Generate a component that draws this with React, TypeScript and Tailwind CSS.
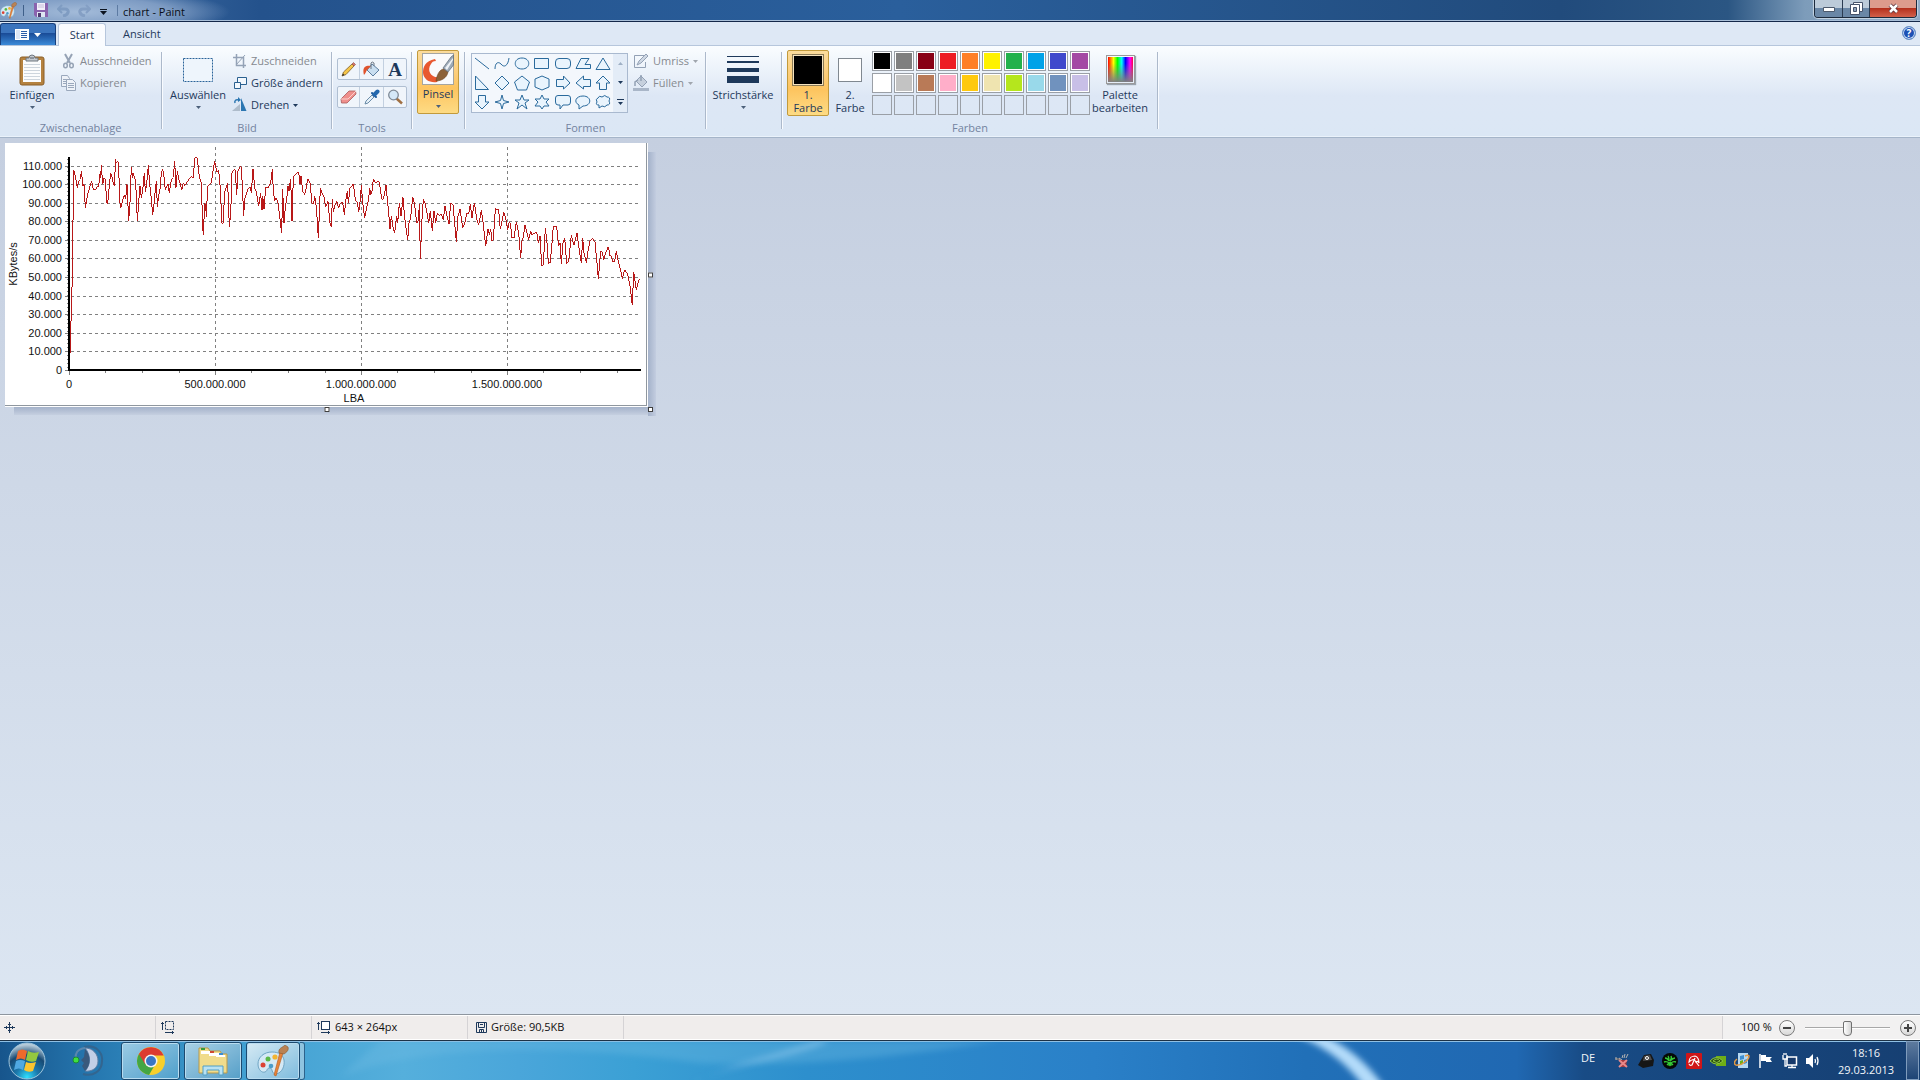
import { useState } from 'react';
import type { ReactNode } from 'react';

const TRACE_LEFT =
    '212,652 212,555 214,555 214,457 217,450 219,255 221,102 226,122 232,156 236,135 241,130 244,104 249,150 252,145 256,216 260,190 264,172 270,150 275,134 280,162 286,162 291,152 296,152 300,115 302,125 304,86 308,145 312,127 316,130 320,200 323,202 328,150 332,110 336,122 341,148 344,148 346,70 349,82 352,78 355,78 360,200 362,216 368,192 373,178 377,190 381,145 386,254 390,200 394,92 397,125 399,110 404,125 407,140 412,254 416,200 420,150 424,186 428,165 433,110 436,168 440,145 445,86 449,145 453,180 458,236 462,205 466,160 469,136 472,212 476,180 480,160 484,110 488,100 492,122 496,162 500,150 504,145 508,170 512,140 516,128 520,124 524,76 528,155 532,104 536,128 541,145 545,163 550,140 554,150 560,140 566,132 572,122 580,125 584,66 592,66 598,125 604,140 608,270 610,298 614,200 617,210 619,242 623,150 628,146 634,142 638,110 644,75 650,108 656,104 660,145 666,262 669,262 674,170 680,148 683,142 688,272 692,235 696,110 702,102 706,102 710,178 714,104 720,92 724,92 727,150 731,240 734,190 740,170 745,158 750,154 754,170 759,98 764,155 770,172 776,210 782,172 786,223 788,180 792,220 797,152 804,155 808,148 812,142 817,98 820,165 824,195 829,185 834,200 840,250 845,292 848,160 852,262 856,215 860,190 864,150 867,165 872,128 876,256 880,122 886,115 896,108 900,145 903,120 908,165 914,176 920,150 923,128 930,140 936,200 941,205 944,180 949,212 955,307 961,155 966,172 972,182 977,212 984,196 990,262';

const TRACE_RIGHT =
    '0,262 4,274 7,188 10,228 14,210 20,196 26,216 32,200 38,200 43,236 48,190 52,165 55,200 60,155 66,150 70,143 76,192 82,200 86,228 90,200 94,148 98,200 104,246 110,215 116,190 119,155 122,178 126,165 130,128 137,142 142,136 148,138 155,190 160,190 168,148 174,210 180,278 184,240 190,280 194,290 200,240 203,260 208,200 213,240 219,184 223,235 228,275 233,313 237,260 242,245 248,182 254,205 260,262 265,255 268,204 271,370 275,265 280,188 286,205 291,232 296,262 301,224 307,286 312,225 317,260 322,232 328,238 334,235 340,252 345,210 351,240 357,265 362,200 369,208 374,260 379,317 384,240 390,220 394,245 398,276 404,262 410,232 416,234 421,205 426,245 433,200 440,248 446,268 454,222 460,265 467,330 474,280 478,296 482,280 486,316 490,310 496,218 506,222 511,280 516,255 521,228 527,245 533,283 537,260 541,260 546,305 552,305 559,258 566,290 572,367 575,318 580,305 585,266 590,285 596,312 602,285 606,298 612,292 620,288 625,320 630,300 635,390 640,388 646,275 651,320 655,382 660,380 664,345 670,272 680,272 686,330 690,320 694,384 699,320 704,305 710,383 716,375 724,298 732,328 741,290 746,330 754,382 758,306 762,350 769,380 775,340 780,315 788,308 795,318 800,370 805,428 812,345 817,350 821,372 827,350 835,332 840,360 844,360 848,378 854,375 859,345 865,378 872,402 877,428 884,402 893,415 900,450 907,508 911,408 919,462 924,440 929,428';

const yLabels = [
    { y: 23, text: '110.000' },
    { y: 41, text: '100.000' },
    { y: 60, text: '90.000' },
    { y: 78, text: '80.000' },
    { y: 97, text: '70.000' },
    { y: 115, text: '60.000' },
    { y: 134, text: '50.000' },
    { y: 153, text: '40.000' },
    { y: 171, text: '30.000' },
    { y: 190, text: '20.000' },
    { y: 208, text: '10.000' },
    { y: 227, text: '0' },
];

const xLabels = [
    { x: 64, text: '0' },
    { x: 210, text: '500.000.000' },
    { x: 356, text: '1.000.000.000' },
    { x: 502, text: '1.500.000.000' },
];

const minorTicks = [100, 137, 174, 246, 283, 320, 392, 429, 466, 538, 575, 612];

const palette = [
    ['#000000', '#7f7f7f', '#880015', '#ed1c24', '#ff7f27', '#fff200', '#22b14c', '#00a2e8', '#3f48cc', '#a349a4'],
    ['#ffffff', '#c3c3c3', '#b97a57', '#ffaec9', '#ffc90e', '#efe4b0', '#b5e61d', '#99d9ea', '#7092be', '#c8bfe7'],
    ['', '', '', '', '', '', '', '', '', ''],
];

// 16x16 outlines for the shape gallery, row by row
const shapes = [
    { name: 'Linie', d: 'M1 2L15 13' },
    { name: 'Kurve', d: 'M1 13C1 7 4 5 7 8C10 12 14 10 15 2' },
    { name: 'Ellipse', d: 'M8 2C17 2 17 13 8 13C-1 13 -1 2 8 2Z' },
    { name: 'Rechteck', d: 'M.5 2.500H14.500V12.500H.5Z' },
    { name: 'Abgerundetes Rechteck', d: 'M4 2.500H12Q15.500 2.500 15.500 6V9Q15.500 12.500 12 12.500H4Q.5 12.500 .5 9V6Q.5 2.500 4 2.500Z' },
    { name: 'Polygon', d: 'M6 2.500H14L10 8.500H15.500V12.500H1Z' },
    { name: 'Dreieck', d: 'M8 2L15 13.500H1Z' },
    { name: 'Rechtwinkliges Dreieck', d: 'M1.500 1V14.500H14.500Z' },
    { name: 'Raute', d: 'M8 1L15 8L8 15L1 8Z' },
    { name: 'Fünfeck', d: 'M8 1L15.500 7L12.500 15H3.500L.5 7Z' },
    { name: 'Sechseck', d: 'M8 1L15 4V12L8 15L1 12V4Z' },
    { name: 'Pfeil nach rechts', d: 'M1.500 4.500H8.500V1L15 8L8.500 14V11.500H1.500Z' },
    { name: 'Pfeil nach links', d: 'M15.500 4.500H8.500V1L1 8L8.500 14V11.500H15.500Z' },
    { name: 'Pfeil nach oben', d: 'M8 1L15 8H11.500V14.500H4.500V8H1Z' },
    { name: 'Pfeil nach unten', d: 'M8 15L1 8H4.500V1.500H11.500V8H15Z' },
    { name: 'Vierzackiger Stern', d: 'M8 1L9.500 6.500L15 8L9.500 9.500L8 15L6.500 9.500L1 8L6.500 6.500Z' },
    { name: 'Fünfzackiger Stern', d: 'M8 1L10 6H15L11 9L13 15L8 11L3 15L5 9L1 6H6Z' },
    { name: 'Sechszackiger Stern', d: 'M8 1L10 5H15L12 8L15 12H10L8 15L6 12H1L4 8L1 5H6Z' },
    { name: 'Rechteckige Legende', d: 'M3 1.500H13Q15.500 1.500 15.500 4V8Q15.500 11 13 11H8L5 15V11H3Q.5 11 .5 8V4Q.5 1.500 3 1.500Z' },
    { name: 'Ovale Legende', d: 'M4 11C-2 8 1 2 8 2C17 2 17 12 8 12L4 15Z' },
    { name: 'Wolkenlegende', d: 'M3 4Q4 1 7 3Q10 0 12 3Q16 3 14 7Q16 11 12 11Q10 14 7 12L4 14L4 11Q0 11 2 8Q0 5 3 4Z' },
];

function Arrow({ className = 'text-[#1e395b]' }: { className?: string }) {
    return (
        <svg width="5" height="3" viewBox="0 0 5 3" className={className}>
            <path d="M0 0H5L2.500 3Z" fill="currentColor" />
        </svg>
    );
}

function Group({ label, className, children }: { label: string; className: string; children: ReactNode }) {
    return (
        <div className="flex shrink-0">
            <section className={`flex flex-col ${className}`}>
                <div className="flex h-[70px] items-start">{children}</div>
                <div className="text-center leading-4 text-[#7383a0]">{label}</div>
            </section>
            <div className="mt-[2px] h-[77px] w-[2px] border-r border-l border-r-[#f8fbff] border-l-[#acb9cb]"></div>
        </div>
    );
}

interface BigButtonProps {
    label: string;
    second?: string;
    icon: ReactNode;
    className: string;
}

function BigButton({ label, second, icon, className }: BigButtonProps) {
    return (
        <button className={`flex shrink-0 flex-col items-center border leading-[13px] ${className}`}>
            <span className="flex h-[37px] items-center">{icon}</span>
            <span>{label}</span>
            <span className="flex h-[13px] items-center">{second ?? <Arrow className="text-[#4c607a]" />}</span>
        </button>
    );
}

function SmallButton({ label, icon, arrow, disabled }: { label: string; icon: ReactNode; arrow?: boolean; disabled?: boolean }) {
    return (
        <button disabled={disabled} className="flex h-[22px] items-center gap-1 whitespace-nowrap disabled:text-[#868a90]">
            {icon}
            <span>{label}</span>
            {arrow && <Arrow className={disabled ? 'text-[#a0a6ae]' : 'text-[#1e395b]'} />}
        </button>
    );
}

function PaintIcon({ size }: { size: number }) {
    return (
        <svg width={size} height={size} viewBox="0 0 32 32">
            <path d="M15 7C7 7 1 12 1 19C1 25 5 28 8 27C11 26 9 23 13 23C16 23 14 29 19 29C25 28 28 21 27 15C26 10 22 7 15 7Z" fill="#d5e9f5" stroke="#6fa5c4" />
            <circle cx="6" cy="20" r="2.500" fill="#dc4234" />
            <circle cx="11" cy="14" r="2.500" fill="#5cb947" />
            <circle cx="18" cy="12" r="2.600" fill="#f2b431" />
            <circle cx="14" cy="21" r="2.300" fill="#4b9cc9" />
            <path d="M26 8L19 31L17 30L23 7Z" fill="#e7833a" stroke="#b45a1d" strokeWidth=".6" />
            <path d="M22 8C21 3 25 3 28 0L31 2C32 5 30 7 27 9Z" fill="#b98254" stroke="#8a5a33" strokeWidth=".6" />
        </svg>
    );
}

function TitleBar() {
    return (
        <header className="flex h-[22px] items-start border-b border-[#14284a] shadow-[inset_0_-1px_0_#a9bfd8] [background:radial-gradient(ellipse_150px_24px_at_80px_12px,#a3bbd9_0%,#7d9bc3_60%,transparent_100%),linear-gradient(90deg,#4c78ad_0,#24528c_260px,#2a5f9c_900px,#214b7c_1560px,#2b5683_90%,#7d9cba_94%,#8fabc6_100%)]">
            <div className="flex h-[20px] items-center text-[#1c1f26]">
                <PaintIcon size={17} />
                <div className="ml-[6px] h-[11px] w-px bg-[#3f5f89]"></div>
                <button aria-label="Speichern" className="ml-[10px]">
                    <svg width="14" height="14" viewBox="0 0 14 14">
                        <path d="M0 0H14V14H2L0 12Z" fill="#8a63ae" />
                        <path d="M3 0H11V7H3Z" fill="#f3effa" />
                        <path d="M4 2H10M4 4H10" stroke="#c9bfda" />
                        <path d="M3 9H11V14H3Z" fill="#dfe6f2" />
                        <path d="M4 10H7V14H4Z" fill="#4f3a72" />
                    </svg>
                </button>
                <button aria-label="Rückgängig" className="ml-[9px]" disabled>
                    <svg width="13" height="13" viewBox="0 0 13 13" fill="none" stroke="#7f9cc2" strokeWidth="3">
                        <path d="M2 5H8C13 5 12 11 6 12" />
                        <path d="M5 1L1 5L5 9" strokeWidth="2" />
                    </svg>
                </button>
                <button aria-label="Wiederholen" className="ml-2" disabled>
                    <svg width="13" height="13" viewBox="0 0 13 13" fill="none" stroke="#849fc4" strokeWidth="3">
                        <path d="M11 5H5C0 5 1 11 7 12" />
                        <path d="M8 1L12 5L8 9" strokeWidth="2" />
                    </svg>
                </button>
                <button aria-label="Schnellzugriff anpassen" className="ml-[9px] pt-1">
                    <svg width="7" height="6" viewBox="0 0 7 6">
                        <path d="M0 0H7V1H0ZM0 2H7L3.500 6Z" fill="#0c1420" />
                    </svg>
                </button>
                <div className="ml-[10px] h-[11px] w-px bg-[#5d7ba3]"></div>
                <h1 className="ml-[5px] pt-1 text-[11px] text-[#0a0f18]">chart - Paint</h1>
            </div>
            <div className="mr-[3px] ml-auto flex h-[18px] overflow-hidden rounded-b-[4px] border border-t-0 border-[#1c2a3c] shadow-[0_0_1px_1px_#c8d6e4]">
                <button aria-label="Minimieren" className="flex w-[28px] items-center justify-center border-r border-[#2b3c52] bg-linear-to-b from-[#bccbd9] from-50% to-[#6a87a6] to-50% pt-[2px]">
                    <svg width="12" height="5" viewBox="0 0 12 5">
                        <path d="M.5.5H11.500V4.500H.5Z" fill="#fff" stroke="#4d5a6c" />
                    </svg>
                </button>
                <button aria-label="Verkleinern" className="flex w-[27px] items-center justify-center border-r border-[#2b3c52] bg-linear-to-b from-[#bccbd9] from-50% to-[#6a87a6] to-50%">
                    <svg width="13" height="13" viewBox="0 0 13 13">
                        <path d="M3.500.5H12.500V9.500H3.500Z" fill="#fff" stroke="#46536a" />
                        <path d="M.5 2.500H9.500V12.500H.5Z" fill="#fff" stroke="#46536a" />
                        <path d="M3.500 5.500H6.500V9.500H3.500Z" fill="#8fa3ba" stroke="#46536a" />
                    </svg>
                </button>
                <button aria-label="Schließen" className="flex w-[46px] items-center justify-center bg-linear-to-b from-[#dd9b8c] from-50% via-[#b5301c] via-50% to-[#d2604a]">
                    <svg width="13" height="11" viewBox="0 0 13 11" fill="none">
                        <path d="M3 2L10 9M10 2L3 9" stroke="#5a3038" strokeWidth="4" />
                        <path d="M3 2L10 9M10 2L3 9" stroke="#fff" strokeWidth="2.500" />
                    </svg>
                </button>
            </div>
        </header>
    );
}

function Tabs() {
    return (
        <nav className="flex h-[24px] items-end border-b border-[#b6c6dc] bg-[#dee8f5] pr-1 text-[#1e395b]">
            <button aria-label="Datei" className="flex h-[22px] w-[56px] items-center justify-center gap-[5px] rounded-t-[3px] border border-b-0 border-[#173f7c] bg-linear-to-b from-[#3b74bd] from-45% via-[#1a4c98] via-45% to-[#3b8ad8]">
                <svg width="14" height="11" viewBox="0 0 14 11">
                    <path d="M0 0H14V11H0Z" fill="#fff" />
                    <path d="M6 2.500H12M6 4.500H12M6 6.500H12M6 8.500H12" stroke="#2c5ea8" />
                    <path d="M1 1H5V10H1Z" fill="#dce7f5" />
                </svg>
                <svg width="7" height="4" viewBox="0 0 7 4">
                    <path d="M0 0H7L3.500 4Z" fill="#fff" />
                </svg>
            </button>
            <button className="-mb-px ml-[2px] h-[23px] w-[48px] rounded-t-[3px] border border-b-0 border-[#b6c6dc] bg-[#fafcff]">Start</button>
            <button className="ml-2 h-[22px] px-[9px]">Ansicht</button>
            <button aria-label="Hilfe" className="mb-[5px] ml-auto flex size-[14px] items-center justify-center rounded-full border border-[#6d93c8] bg-[#1d51b5] text-[10px] leading-none font-bold text-white shadow-[inset_0_0_0_1px_#cfe0f5]">
                ?
            </button>
        </nav>
    );
}

function Ribbon() {
    const selected = 'rounded-[2px] border-[#c29a3c] bg-linear-to-b from-[#fbdc9d] from-0% via-[#fdc45f] via-60% to-[#fddb84]';

    return (
        <div className="flex h-[92px] overflow-hidden border-b border-[#a5b5c9] bg-linear-to-b from-[#fafdff] via-[#dde7f5] via-55% to-[#dbe7f5] pt-1 text-[#1e395b] shadow-[inset_0_-1px_0_#eaf2fb]">
            <Group label="Zwischenablage" className="w-[161px]">
                <BigButton
                    label="Einfügen"
                    className="ml-1 w-[56px] border-transparent"
                    icon={
                        <svg width="26" height="32" viewBox="0 0 26 32">
                            <rect x="1" y="3" width="24" height="28" rx="2" fill="#b5823f" stroke="#8b5f28" />
                            <path d="M4 6H22V28H4Z" fill="#fbfcfd" />
                            <path d="M5 10.500H21M5 13.500H21M5 16.500H21M5 19.500H21M5 22.500H21M5 25.500H21" stroke="#cdd5dd" />
                            <path d="M7 7V4H10Q10 1 13 1Q16 1 16 4H19V7Z" fill="#c3c9d0" stroke="#6f767e" />
                            <path d="M11 4H15" stroke="#555c66" />
                        </svg>
                    }
                />
                <div className="flex flex-col">
                    <SmallButton
                        disabled
                        label="Ausschneiden"
                        icon={
                            <svg width="16" height="16" viewBox="0 0 16 16" fill="none" stroke="#96a3b5" strokeWidth="1.500">
                                <path d="M5 1L10 10M12 1L7 10" strokeWidth="2" />
                                <ellipse cx="5.500" cy="12.500" rx="1.800" ry="2.300" />
                                <ellipse cx="11.500" cy="12.500" rx="1.800" ry="2.300" />
                            </svg>
                        }
                    />
                    <SmallButton
                        disabled
                        label="Kopieren"
                        icon={
                            <svg width="16" height="16" viewBox="0 0 16 16" fill="#eef2f8" stroke="#9aa8bc">
                                <path d="M1.500.5H7.500L9.500 3.500V11.500H1.500Z" />
                                <path d="M3 4.500H7M3 6.500H7M3 8.500H7" />
                                <path d="M6.500 4.500H12.500L15.500 7.500V15.500H6.500Z" />
                                <path d="M8 8.500H14M8 10.500H14M8 12.500H14" />
                            </svg>
                        }
                    />
                </div>
            </Group>

            <Group label="Bild" className="w-[168px]">
                <BigButton
                    label="Auswählen"
                    className="ml-1 w-[62px] border-transparent"
                    icon={
                        <svg width="30" height="24" viewBox="0 0 30 24">
                            <rect x=".5" y=".5" width="29" height="23" fill="#eef5fc" stroke="#2a6399" strokeDasharray="2 1" />
                        </svg>
                    }
                />
                <div className="flex flex-col pl-[2px]">
                    <SmallButton
                        disabled
                        label="Zuschneiden"
                        icon={
                            <svg width="16" height="16" viewBox="0 0 16 16" fill="none" stroke="#94a2b6">
                                <path d="M5.500 1V12.500H15M2 4.500H12.500V15" strokeWidth="1.500" />
                                <path d="M5 12L14 2" />
                            </svg>
                        }
                    />
                    <SmallButton
                        label="Größe ändern"
                        icon={
                            <svg width="16" height="16" viewBox="0 0 16 16" fill="#f3f8fd" stroke="#2a6190">
                                <path d="M6.500 2.500H15.500V9.500H6.500Z" />
                                <path d="M3.500 7.500H9.500V13.500H3.500Z" />
                            </svg>
                        }
                    />
                    <SmallButton
                        arrow
                        label="Drehen"
                        icon={
                            <svg width="16" height="16" viewBox="0 0 16 16">
                                <path d="M1 14L9 7V14Z" fill="#aebccb" />
                                <path d="M10 1L15.500 14H10Z" fill="#2b76b1" />
                                <path d="M4 6Q3 2 8 3" fill="none" stroke="#2b76b1" strokeWidth="1.500" />
                                <path d="M7 0L10 3L7 5Z" fill="#2b76b1" />
                            </svg>
                        }
                    />
                </div>
            </Group>

            <Group label="Tools" className="w-[78px]">
                <div className="flex flex-col gap-[6px] pt-2 pl-1">
                    <div className="flex h-[22px] divide-x divide-[#c3d0e0] rounded-[2px] border border-[#b0bfd2] bg-[#f0f5fb]">
                        <button aria-label="Stift" className="flex w-[22px] items-center justify-center">
                            <svg width="16" height="16" viewBox="0 0 16 16">
                                <path d="M1 15L2.500 11L11 3L13 5L5 13.500Z" fill="#f5c548" stroke="#80602a" strokeWidth=".8" />
                                <path d="M11 3L12.500 1.500L14.500 3.500L13 5Z" fill="#d5776b" stroke="#8b4a40" strokeWidth=".6" />
                                <path d="M1 15L2 12.500L3.500 14Z" fill="#2c2c2c" />
                            </svg>
                        </button>
                        <button aria-label="Farbfüller" className="flex w-[24px] items-center justify-center">
                            <svg width="17" height="16" viewBox="0 0 17 16">
                                <path d="M9 3L16 9L10 15L4 9Z" fill="#c9def0" stroke="#5b7d9f" />
                                <path d="M1 14C-1 7 2 4 8 5L4 9C3 10 3 12 1 14Z" fill="#e0532c" />
                                <path d="M8 8V2Q9 0 11 2V5" fill="none" stroke="#6d7885" />
                            </svg>
                        </button>
                        <button aria-label="Text" className="w-[22px] font-['Liberation_Serif',serif] text-[19px] leading-[22px] font-bold text-[#1e395b]">A</button>
                    </div>
                    <div className="flex h-[22px] divide-x divide-[#c3d0e0] rounded-[2px] border border-[#b0bfd2] bg-[#f0f5fb]">
                        <button aria-label="Radierer" className="flex w-[22px] items-center justify-center">
                            <svg width="17" height="14" viewBox="0 0 17 14">
                                <path d="M1 9L9 1H15.500L16 4L7 13H1.500Z" fill="#ef8f8c" stroke="#a85a5c" strokeWidth=".8" />
                                <path d="M1 9H8L16 1" fill="none" stroke="#fbd0cc" />
                            </svg>
                        </button>
                        <button aria-label="Farbauswahl" className="flex w-[24px] items-center justify-center">
                            <svg width="16" height="16" viewBox="0 0 16 16">
                                <path d="M1 15L2 12L8 6L10 8L4 14Z" fill="#e5f0f8" stroke="#6b8ca8" />
                                <path d="M8 4L12 8" stroke="#1d5a9c" strokeWidth="2" strokeLinecap="round" />
                                <path d="M10.500 5.500L13.500 2.500" stroke="#2568ad" strokeWidth="4" strokeLinecap="round" />
                            </svg>
                        </button>
                        <button aria-label="Bildschirmlupe" className="flex w-[22px] items-center justify-center">
                            <svg width="16" height="16" viewBox="0 0 16 16">
                                <path d="M9 9L15 14.500" stroke="#a07043" strokeWidth="2.500" />
                                <circle cx="6.500" cy="6" r="4.800" fill="#d5e8f7" stroke="#7f8a96" strokeWidth="1.300" />
                            </svg>
                        </button>
                    </div>
                </div>
            </Group>

            <div className="flex shrink-0">
                <div className="w-[51px] px-1">
                    <BigButton
                        label="Pinsel"
                        className={`h-[64px] w-[42px] ${selected}`}
                        icon={
                            <svg width="32" height="32" viewBox="0 0 32 32">
                                <rect x=".5" y=".5" width="31" height="31" fill="#f9fafb" stroke="#a5a5a0" />
                                <path d="M13 6C3 8 1 14 1 20C2 27 8 30 15 29L18 24C10 26 4 18 9 11C10 9 11 8 14 8Z" fill="#e8582f" />
                                <path d="M14 28C15 21 18 16 22 16L26 19C25 25 19 28 14 28Z" fill="#8c6239" stroke="#6b4522" strokeWidth=".6" />
                                <path d="M21 15L29 4L31.500 2V12L26 19Z" fill="#9eabb8" stroke="#5c6875" strokeWidth=".7" />
                                <path d="M23 15L31 5V7L25 17Z" fill="#eef2f6" />
                            </svg>
                        }
                    />
                </div>
                <div className="mt-[2px] h-[77px] w-[2px] border-r border-l border-r-[#f8fbff] border-l-[#acb9cb]"></div>
            </div>

            <Group label="Formen" className="w-[239px]">
                <div className="mt-[3px] ml-[5px] flex h-[60px] w-[157px] border border-[#a9b9cf] bg-[#f3f7fc]">
                    <div className="grid flex-1 grid-cols-7">
                        {shapes.map((shape) => (
                            <button key={shape.name} aria-label={shape.name} className="flex items-center justify-center">
                                <svg width="16" height="16" viewBox="0 0 16 16" fill="#e9f4fd" stroke="#2a6a9c">
                                    <path d={shape.d} fill={shape.name === 'Kurve' ? 'none' : undefined} />
                                </svg>
                            </button>
                        ))}
                    </div>
                    <div className="flex w-[14px] flex-col bg-[#e3ecf7]">
                        <button aria-label="Nach oben" className="flex flex-1 items-center justify-center" disabled>
                            <svg width="5" height="3" viewBox="0 0 5 3"><path d="M0 3H5L2.500 0Z" fill="#9fb0c5" /></svg>
                        </button>
                        <button aria-label="Nach unten" className="flex flex-1 items-center justify-center"><Arrow /></button>
                        <button aria-label="Weitere Formen" className="flex flex-1 items-center justify-center">
                            <svg width="7" height="6" viewBox="0 0 7 6"><path d="M0 0H7V1H0ZM1 3H6L3.500 6Z" fill="#1e395b" /></svg>
                        </button>
                    </div>
                </div>
                <div className="flex flex-col pl-[5px]">
                    <SmallButton
                        disabled
                        arrow
                        label="Umriss"
                        icon={
                            <svg width="16" height="16" viewBox="0 0 16 16" fill="none" stroke="#93a1b5">
                                <path d="M11 2.500H1.500V14.500H12.500V9" />
                                <path d="M4 12L6 8L13 1L15 3L8 10Z" fill="#cfd8e4" />
                            </svg>
                        }
                    />
                    <SmallButton
                        disabled
                        arrow
                        label="Füllen"
                        icon={
                            <svg width="16" height="16" viewBox="0 0 16 16" fill="#c6d0dd" stroke="#93a1b5">
                                <path d="M8 1L14 7L9 12L3 6Z" />
                                <path d="M2 11V7L5 5M8 6V0" fill="none" strokeWidth="1.500" />
                                <path d="M0 13H16V16H0Z" fill="#a9b6c8" stroke="none" />
                            </svg>
                        }
                    />
                </div>
            </Group>

            <div className="flex shrink-0">
                <div className="w-[74px]">
                    <BigButton
                        label="Strichstärke"
                        className="w-[72px] border-transparent"
                        icon={
                            <svg width="32" height="28" viewBox="0 0 32 28">
                                <path d="M0 0H32V1H0ZM0 5H32V7H0ZM0 12H32V16H0ZM0 20H32V27H0Z" fill="#1e395b" />
                            </svg>
                        }
                    />
                </div>
                <div className="mt-[2px] h-[77px] w-[2px] border-r border-l border-r-[#f8fbff] border-l-[#acb9cb]"></div>
            </div>

            <Group label="Farben" className="w-[374px]">
                <BigButton
                    label="1."
                    second="Farbe"
                    className={`ml-1 h-[66px] w-[42px] ${selected}`}
                    icon={<span className="size-[32px] border border-[#8b7a55] bg-black shadow-[inset_0_0_0_1px_#f5e2bd]"></span>}
                />
                <BigButton
                    label="2."
                    second="Farbe"
                    className="w-[42px] border-transparent"
                    icon={<span className="size-[24px] border border-[#808890] bg-white"></span>}
                />
                <div className="mt-px ml-px grid grid-cols-10 gap-[2px]">
                    {palette.flat().map((color, i) => (
                        <button
                            key={i}
                            aria-label={color || 'Benutzerdefinierte Farbe'}
                            className={`size-[20px] border border-[#9a9fa6] ${color ? 'shadow-[inset_0_0_0_1px_#fff]' : ''}`}
                            style={{ backgroundColor: color || 'transparent' }}
                        ></button>
                    ))}
                </div>
                <BigButton
                    label="Palette"
                    second="bearbeiten"
                    className="w-[60px] border-transparent"
                    icon={
                        <span className="size-[29px] border border-[#9a9a9a] p-px shadow-[1px_1px_1px_#9aa3ad]">
                            <span className="block size-full bg-[linear-gradient(to_top,#808080,transparent_75%),linear-gradient(to_right,#f00,#ff0_22%,#0f0_38%,#0ff_55%,#00f_70%,#f0f_88%,#f04)]"></span>
                        </span>
                    }
                />
            </Group>
        </div>
    );
}

function Chart() {
    return (
        <svg width="643" height="264" viewBox="0 0 643 264" className="block bg-white font-['Liberation_Sans',Arial,sans-serif] text-[11px]">
            <g shapeRendering="crispEdges" stroke="#808080" fill="none">
                {yLabels.slice(0, -1).map(({ y }) => (
                    <path key={y} d={`M66 ${y + 0.5}H633`} strokeDasharray="3 3" />
                ))}
                {xLabels.slice(1).map(({ x }) => (
                    <path key={x} d={`M${x + 0.5} 4V226`} strokeDasharray="3 3" />
                ))}
                {yLabels.map(({ y }) => (
                    <path key={y} d={`M60 ${y + 0.5}H63`} />
                ))}
                {xLabels.map(({ x }) => (
                    <path key={x} d={`M${x + 0.5} 228V232`} />
                ))}
                {minorTicks.map((x) => (
                    <path key={x} d={`M${x + 0.5} 228V230`} />
                ))}
                <path d="M62.500 16V226" strokeDasharray="1 3" />
                <path d="M64 14V228M63 227H636" stroke="#000" strokeWidth="2" />
            </g>
            {/* the trace is stored in thirds of a pixel */}
            <g transform="translate(-5 -7) scale(.33333)" fill="none" stroke="#b81818" strokeWidth="3" shapeRendering="crispEdges">
                <polyline points={TRACE_LEFT} />
                <polyline points={TRACE_RIGHT} transform="translate(990 0)" />
            </g>
            <g fill="#111">
                {yLabels.map(({ y, text }) => (
                    <text key={y} x="57" y={y + 4} textAnchor="end">{text}</text>
                ))}
                {xLabels.map(({ x, text }) => (
                    <text key={x} x={x} y="245" textAnchor="middle">{text}</text>
                ))}
                <text x="349" y="259" textAnchor="middle">LBA</text>
                <text transform="translate(12 121) rotate(-90)" textAnchor="middle">KBytes/s</text>
            </g>
            <path d="M641.500 0V262M0 262.500H642" stroke="#8f979f" />
        </svg>
    );
}

function Workspace() {
    return (
        <main className="flex-1 bg-linear-to-b from-[#c5cfe0] to-[#dce6f2] px-[5px] pt-[5px]">
            <div className="relative w-fit">
                <div className="absolute top-[9px] left-full h-full w-[8px] bg-linear-to-r from-[#a4b2ca] to-[#c3cde0]"></div>
                <div className="absolute top-full right-0 left-[9px] h-[8px] bg-linear-to-b from-[#a4b2ca] to-[#c5cfe0]"></div>
                <Chart />
                <span className="absolute top-1/2 -right-[5px] size-[5px] -translate-y-1/2 border border-[#404040] bg-white"></span>
                <span className="absolute -bottom-[5px] left-1/2 size-[5px] -translate-x-1/2 border border-[#404040] bg-white"></span>
                <span className="absolute -right-[5px] -bottom-[5px] size-[5px] border border-[#404040] bg-white"></span>
            </div>
        </main>
    );
}

function StatusBar() {
    const [zoom, setZoom] = useState(50);
    const cell = 'flex h-[23px] w-[156px] items-center gap-1 border-r border-[#d5d3d5] pl-1';

    return (
        <footer className="flex h-[27px] items-center border-t border-b border-t-[#8e969f] border-b-[#1d3246] bg-[#f0edec] text-[#101010] shadow-[inset_0_1px_0_#fff,inset_0_-1px_0_#fff]">
            <div className={cell}>
                <svg width="11" height="11" viewBox="0 0 11 11" fill="none" stroke="#1e395b">
                    <path d="M5.500 0V11M0 5.500H11M4 2.500H7M4 8.500H7M2.500 4V7M8.500 4V7" />
                </svg>
            </div>
            <div className={cell}>
                <svg width="14" height="13" viewBox="0 0 14 13" fill="none" stroke="#1e395b" className="ml-px">
                    <path d="M1.500 1V9M0 2.500H3M4 11.500H13M11.500 10V13" />
                    <rect x="4.500" y=".5" width="8" height="8" strokeDasharray="2 1" />
                </svg>
            </div>
            <div className={cell}>
                <svg width="14" height="13" viewBox="0 0 14 13" fill="none" stroke="#1e395b" className="ml-px">
                    <path d="M1.500 1V9M0 2.500H3M4 11.500H13M11.500 10V13" />
                    <rect x="4.500" y=".5" width="8" height="8" fill="#fff" />
                </svg>
                <span>643 × 264px</span>
            </div>
            <div className={cell}>
                <svg width="11" height="11" viewBox="0 0 11 11" fill="none" stroke="#1e395b" className="ml-1">
                    <path d="M.5.5H10.500V10.500H.5ZM2.500 1V5.500H8.500V1M3.500 10V7.500H7.500V10M4 2.500H7M5.500 8V10" />
                </svg>
                <span>Größe: 90,5KB</span>
            </div>
            <div className="ml-auto flex h-[23px] items-center border-l border-[#d5d3d5] bg-[#f2f1f1] pr-1">
                <label htmlFor="zoom" className="w-[56px] pl-[18px] whitespace-nowrap">100 %</label>
                <button aria-label="Verkleinern" className="flex size-4 items-center justify-center rounded-full border border-[#7c7c7c] bg-linear-to-b from-white to-[#d8d8d8]">
                    <span className="h-[2px] w-2 bg-[#444]"></span>
                </button>
                <input
                    id="zoom"
                    type="range"
                    value={zoom}
                    onChange={(e) => setZoom(Number(e.target.value))}
                    className="mx-[10px] h-4 w-[85px] appearance-none bg-transparent [&::-webkit-slider-runnable-track]:h-[2px] [&::-webkit-slider-runnable-track]:border-t [&::-webkit-slider-runnable-track]:border-[#a8a8a8] [&::-webkit-slider-runnable-track]:bg-white [&::-webkit-slider-thumb]:-mt-[7px] [&::-webkit-slider-thumb]:h-[15px] [&::-webkit-slider-thumb]:w-[9px] [&::-webkit-slider-thumb]:appearance-none [&::-webkit-slider-thumb]:rounded-t-[2px] [&::-webkit-slider-thumb]:rounded-b-[4px] [&::-webkit-slider-thumb]:border [&::-webkit-slider-thumb]:border-[#707070] [&::-webkit-slider-thumb]:bg-linear-to-r [&::-webkit-slider-thumb]:from-white [&::-webkit-slider-thumb]:to-[#d5d5d5]"
                />
                <button aria-label="Vergrößern" className="flex size-4 items-center justify-center rounded-full border border-[#7c7c7c] bg-linear-to-b from-white to-[#d8d8d8]">
                    <svg width="8" height="8" viewBox="0 0 8 8"><path d="M4 0V8M0 4H8" stroke="#444" strokeWidth="2" /></svg>
                </button>
            </div>
        </footer>
    );
}

function TrayIcons() {
    const icons = [
        {
            name: 'Gerät getrennt',
            svg: (
                <>
                    <path d="M1 5H5L7 7H2Z" fill="#6d7078" />
                    <path d="M2 4V7M5 5L8 7M8 5L9 2M10 5L11 1M12 5L14 1" stroke="#b4b4b4" fill="none" />
                    <path d="M6 7H13L12 14H7Z" fill="#a4383c" />
                    <path d="M5 7L13 14M13 7L5 14" stroke="#e8898a" strokeWidth="2" />
                </>
            ),
        },
        {
            name: 'Schlüssel',
            svg: (
                <>
                    <path d="M6 2L13 1L16 7L15 13L5 15L0 12Z" fill="#161616" />
                    <path d="M6 3L12 2L14 7L5 8Z" fill="#4a4a4a" />
                    <circle cx="9" cy="5" r="1.500" fill="none" stroke="#fff" />
                </>
            ),
        },
        {
            name: 'Razer',
            svg: (
                <>
                    <circle cx="8" cy="8" r="8" fill="#050805" />
                    <path d="M3 5C5 5 6 6 7 8C7 5 7 4 6 3M9 3C10 5 9 7 8 8C10 6 11 5 13 5M2 9C5 8 6 9 7 10L5 12M14 9C11 8 10 9 9 10L11 12M7 13L8 9L9 13" fill="none" stroke="#35c935" strokeWidth="1.400" />
                </>
            ),
        },
        {
            name: 'Avira',
            svg: (
                <>
                    <rect width="16" height="16" rx="1" fill="#cf1518" />
                    <path d="M3 9C3 5 6 3 9 3C12 4 13 6 13 10C12 8 11 8 10 9C9 7 8 6 6 7C5 7 4 8 3 9Z" fill="none" stroke="#fff" strokeWidth="1.200" />
                    <path d="M9 5L6 12Q4 13 3 11M10 9L13 13" fill="none" stroke="#fff" strokeWidth="1.200" />
                </>
            ),
        },
        {
            name: 'NVIDIA',
            svg: (
                <>
                    <path d="M6 3H16V13H6Z" fill="#6fae16" />
                    <path d="M0 8Q6 1 13 8Q6 14 0 8ZM3 8Q7 4 10 8Q7 11 3 8Z" fill="#2f5410" stroke="#8bc53f" />
                </>
            ),
        },
        {
            name: 'Windows Update',
            svg: (
                <>
                    <path d="M4 0H14V15H4Z" fill="#b5d8f2" />
                    <path d="M6 3L10 2V6L6 7ZM10 7L13 6V10L10 11Z" fill="#3f8fd0" />
                    <path d="M6 8L9 7V11L6 12Z" fill="#6fae16" />
                    <path d="M3 6C-1 9 0 13 4 12C8 12 15 7 15 3C15 2 13 2 11 3" fill="none" stroke="#e39a45" strokeWidth="1.500" />
                </>
            ),
        },
        {
            name: 'Wartungscenter',
            svg: (
                <>
                    <path d="M2 1V15" stroke="#fff" strokeWidth="1.500" />
                    <path d="M3 2H8V4H14L12 6L14 9H8V8H3Z" fill="#fff" />
                </>
            ),
        },
        {
            name: 'Netzwerk',
            svg: (
                <>
                    <path d="M5 4H14.500V12H5Z" fill="#16396a" stroke="#fff" strokeWidth="1.500" />
                    <path d="M6 14.500H14M10 12V14M1 2V6H5V2M3 6V13H5M2 0V2M4 0V2" fill="none" stroke="#fff" strokeWidth="1.300" />
                </>
            ),
        },
        {
            name: 'Lautsprecher',
            svg: (
                <>
                    <path d="M0 5H3L7 1V15L3 11H0Z" fill="#fff" />
                    <path d="M9 6Q10 8 9 10M11 4Q13 8 11 12" fill="none" stroke="#fff" strokeWidth="1.300" />
                </>
            ),
        },
    ];

    return (
        <div className="flex">
            {icons.map((icon) => (
                <button key={icon.name} aria-label={icon.name} className="flex w-[24px] items-center justify-center">
                    <svg width="16" height="16" viewBox="0 0 16 16">{icon.svg}</svg>
                </button>
            ))}
        </div>
    );
}

function Taskbar() {
    const task = 'flex h-[38px] items-center justify-center rounded-[3px] border border-[#1c4a70] shadow-[inset_0_0_0_1px_#b8dcf0]';

    return (
        <div className="relative flex h-[39px] items-stretch overflow-hidden shadow-[inset_0_1px_0_#8fc0e4] [background:linear-gradient(90deg,#17558c_0,#2678b0_5%,#3f9ed0_12%,#55afdc_21%,#4aa6da_27%,#3ba0d5_33%,#2d8fcd_42%,#2a80c8_57%,#2170b8_68%,#2068b2_79%,#184b85_82.500%,#163f72_100%)]">
            <svg className="pointer-events-none absolute inset-0 size-full" preserveAspectRatio="none" viewBox="0 0 1920 39">
                <defs>
                    <filter id="soft" x="-20%" y="-50%" width="140%" height="200%">
                        <feGaussianBlur stdDeviation="3" />
                    </filter>
                </defs>
                <path d="M1296 -6C1330 8 1350 26 1364 46L1384 46C1368 22 1346 4 1322 -6Z" fill="#b4dcfa" filter="url(#soft)" />
                <path d="M690 42C730 22 790 18 830 0L818 0C780 12 740 20 690 42Z" fill="#7dbbe6" filter="url(#soft)" />
                <path d="M340 36C420 4 560 2 700 22C800 26 900 16 1000 0L600 0L380 0Z" fill="#6fbce3" opacity=".35" filter="url(#soft)" />
            </svg>
            <button aria-label="Start" className="relative flex w-[54px] items-center justify-center">
                <svg width="38" height="38" viewBox="0 0 38 38">
                    <defs>
                        <radialGradient id="orb" cx=".5" cy=".95" r=".9">
                            <stop offset="0" stopColor="#2fe0ff" />
                            <stop offset=".35" stopColor="#1b78ac" />
                            <stop offset=".7" stopColor="#174a74" />
                            <stop offset="1" stopColor="#b6cbd9" />
                        </radialGradient>
                    </defs>
                    <circle cx="19" cy="19" r="18" fill="url(#orb)" stroke="#9fc5dc" />
                    <path d="M10 9Q14 6 19 9L17 18Q13 15 8 18Z" fill="#ee6a2c" />
                    <path d="M20 9Q25 12 31 10L28 19Q23 21 18 18Z" fill="#94c83f" />
                    <path d="M8 19Q12 17 17 19L15 28Q11 25 6 28Z" fill="#4fa9e2" />
                    <path d="M18 20Q22 22 28 20L25 29Q20 31 16 28Z" fill="#fbc52f" />
                </svg>
            </button>
            <button aria-label="TeamSpeak" className="relative flex w-[67px] items-center justify-center">
                <svg width="32" height="32" viewBox="0 0 32 32">
                    <path d="M12 2C24 -1 31 8 30 16C30 26 21 32 11 29" fill="none" stroke="#33658f" strokeWidth="2" />
                    <path d="M13 3C21 3 26 9 26 16C26 23 20 27 13 26C19 20 19 10 13 3Z" fill="#c3cfe6" stroke="#5f7fa5" />
                    <path d="M13 3C5 4 3 9 4 13" fill="none" stroke="#5b87ae" strokeWidth="2" />
                    <path d="M13 4C19 10 19 20 13 26L10 21L12 18L9 15L12 12Z" fill="#39597c" />
                    <circle cx="4" cy="15" r="3" fill="#3fe03f" stroke="#1d8a34" />
                </svg>
            </button>
            <div className="relative flex items-center gap-1">
                <button aria-label="Google Chrome" className={`w-[59px] bg-linear-to-br from-[#9bcbe4] to-[#4d9fcb] ${task}`}>
                    <svg width="28" height="28" viewBox="0 0 28 28">
                        <circle cx="14" cy="14" r="14" fill="#f8cf2c" />
                        <path d="M14 14L1.900 7A14 14 0 0 0 12 27.900L19 16Z" fill="#43a644" />
                        <path d="M1.900 7A14 14 0 0 1 26.700 8.500H14L8 17Z" fill="#dd3b30" />
                        <circle cx="14" cy="14" r="6.500" fill="#f3f3f3" />
                        <circle cx="14" cy="14" r="5" fill="#3a76c4" />
                    </svg>
                </button>
                <button aria-label="Windows-Explorer" className={`w-[58px] bg-linear-to-br from-[#a9d1e6] to-[#549fc8] ${task}`}>
                    <svg width="34" height="32" viewBox="0 0 34 32">
                        <path d="M3 3H12L14 6H24L26 9H31V28H3Z" fill="#f0dc8c" stroke="#b8994a" />
                        <path d="M5 6H15V9H5ZM13 8H23V11H13ZM20 10H29V12H20Z" fill="#fff" />
                        <path d="M5 3H9V5H5Z" fill="#3a9a3a" />
                        <path d="M14 6H18V8H14Z" fill="#cf4a31" />
                        <path d="M23 8H27V10H23Z" fill="#3c8ed0" />
                        <path d="M7 30V21H27V30H23V25H11V30Z" fill="#b9e2f3" stroke="#519fc6" />
                    </svg>
                </button>
                <div className="flex">
                    <button aria-label="Paint" className={`w-[54px] bg-linear-to-br from-[#d5eaf4] to-[#7dbbdd] ${task}`}>
                        <PaintIcon size={32} />
                    </button>
                    <div className="h-[38px] w-[5px] rounded-r-[3px] border border-l-0 border-[#2c638c] bg-[#8fc4e0]"></div>
                </div>
            </div>
            <div className="relative ml-auto flex text-[#f2f6fa]">
                <button className="w-[29px] pb-1 text-left">DE</button>
                <TrayIcons />
                <div className="flex w-[80px] flex-col justify-center text-center leading-[17px]">
                    <span>18:16</span>
                    <span>29.03.2013</span>
                </div>
                <button aria-label="Desktop anzeigen" className="mr-px w-[13px] border border-[#7f9cbd] bg-linear-to-b from-[#5d7a9e] to-[#1d4475]"></button>
            </div>
        </div>
    );
}

export default function App() {
    return (
        <div className="flex min-h-screen flex-col font-['Open_Sans','Noto_Sans',sans-serif] text-[11px]">
            <TitleBar />
            <Tabs />
            <Ribbon />
            <Workspace />
            <StatusBar />
            <Taskbar />
        </div>
    );
}
